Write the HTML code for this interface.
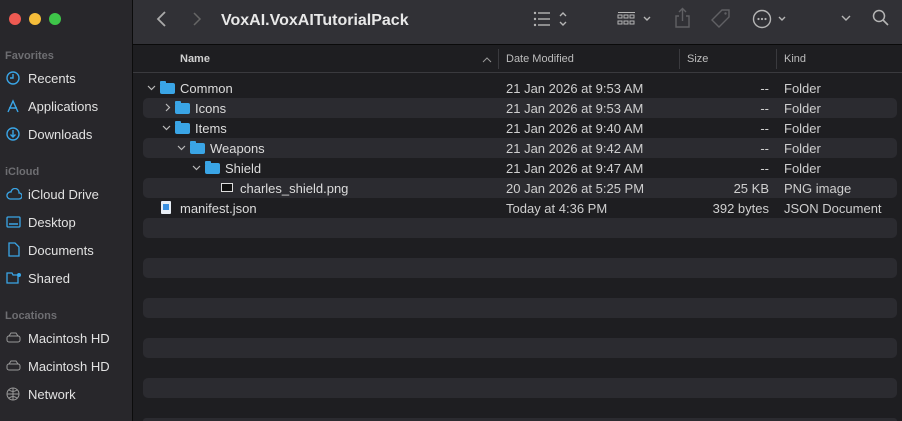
<!DOCTYPE html>
<html style="width:902px;height:421px;overflow:hidden"><head><meta charset="utf-8"><style>
*{margin:0;padding:0;box-sizing:border-box}
body{width:902px;height:421px;overflow:hidden;background:#1e1e21;font-family:"Liberation Sans",sans-serif;color:#dcdcdc;position:relative}
.sb{position:absolute;left:0;top:0;width:133px;height:421px;background:#28272b;border-right:1px solid #0c0c0c}
.dot{position:absolute;top:13px;width:12px;height:12px;border-radius:50%}
.sec{position:absolute;left:5px;font-size:11px;color:#6e6e72;font-weight:bold}
.it{position:absolute;left:28px;top:0;font-size:13px;color:#e2e2e2}
.ic{position:absolute;left:6px}
.tb{position:absolute;left:133px;top:0;right:0;height:45px;background:#313136;border-bottom:1px solid #0a0a0a}
.title{position:absolute;left:221px;top:12px;font-size:16px;font-weight:bold;color:#e8e8e8}
.hd{position:absolute;left:133px;top:45px;right:0;height:28px;border-bottom:1px solid #3a3a3e;font-size:11px;color:#bdbdbd}
.hd span{position:absolute;top:8px}
.hd i{position:absolute;top:4px;width:1px;height:20px;background:#3a3a3e}
.row{position:absolute;left:143px;width:754px;height:20px;border-radius:5px;font-size:13px;overflow:hidden}
.st{background:#2b2b30}
.row span{position:absolute;top:3px;white-space:nowrap}
.d{left:363px;color:#cfcfcf}.s{right:128px;color:#cfcfcf}.k{left:641px;color:#cfcfcf}
.f{position:absolute;top:5px;width:15px;height:11px;background:#3aa5e6;border-radius:2px}
.f:before{content:"";position:absolute;left:0;top:-2px;width:6px;height:3px;background:#3aa5e6;border-radius:1px 1px 0 0}
.ch{position:absolute;top:7px}
</style></head><body>
<div class="sb">
<div class="dot" style="left:9px;background:#ee5a52"></div>
<div class="dot" style="left:29px;background:#f5bd3a"></div>
<div class="dot" style="left:49px;background:#3ec549"></div>
<div class="sec" style="top:50px">Favorites</div>
<svg class="ic" style="top:71px" width="14" height="14"><circle cx="7" cy="7" r="6" fill="none" stroke="#3aa5e6" stroke-width="1.4"/><path d="M7 3v4H4" stroke="#3aa5e6" fill="none" stroke-width="1.4"/></svg>
<div class="it" style="top:71px">Recents</div>
<svg class="ic" style="top:99px" width="14" height="14"><path d="M2 13L7 2l5 11M3 9h8" stroke="#3aa5e6" fill="none" stroke-width="1.4"/></svg>
<div class="it" style="top:99px">Applications</div>
<svg class="ic" style="top:127px" width="14" height="14"><circle cx="7" cy="7" r="6" fill="none" stroke="#3aa5e6" stroke-width="1.4"/><path d="M7 3v7M4.5 7.5L7 10l2.5-2.5" stroke="#3aa5e6" fill="none" stroke-width="1.4"/></svg>
<div class="it" style="top:127px">Downloads</div>
<div class="sec" style="top:166px">iCloud</div>
<svg class="ic" style="top:188px" width="16" height="12"><path d="M4 11h9a3 3 0 000-6 4 4 0 00-8-1A3.5 3.5 0 004 11z" stroke="#3aa5e6" fill="none" stroke-width="1.3"/></svg>
<div class="it" style="top:187px">iCloud Drive</div>
<svg class="ic" style="top:216px" width="15" height="12"><rect x="1" y="1" width="13" height="10" rx="1" stroke="#3aa5e6" fill="none" stroke-width="1.3"/><path d="M3 8h9" stroke="#3aa5e6" stroke-width="1.5"/></svg>
<div class="it" style="top:215px">Desktop</div>
<svg class="ic" style="top:242px;left:8px" width="12" height="15"><path d="M1 1h6l4 4v9H1z" stroke="#3aa5e6" fill="none" stroke-width="1.3"/></svg>
<div class="it" style="top:243px">Documents</div>
<svg class="ic" style="top:271px" width="16" height="13"><path d="M1 2h5l1 2h5v8H1z" stroke="#3aa5e6" fill="none" stroke-width="1.3"/><circle cx="13" cy="4" r="2" fill="#3aa5e6"/></svg>
<div class="it" style="top:271px">Shared</div>
<div class="sec" style="top:310px">Locations</div>
<svg class="ic" style="top:332px" width="15" height="11"><rect x="1" y="4" width="13" height="6" rx="2" stroke="#999" fill="none"/><path d="M3 4l2-3h5l2 3" stroke="#999" fill="none"/></svg>
<div class="it" style="top:331px">Macintosh HD</div>
<svg class="ic" style="top:360px" width="15" height="11"><rect x="1" y="4" width="13" height="6" rx="2" stroke="#999" fill="none"/><path d="M3 4l2-3h5l2 3" stroke="#999" fill="none"/></svg>
<div class="it" style="top:359px">Macintosh HD</div>
<svg class="ic" style="top:387px" width="14" height="14"><circle cx="7" cy="7" r="6" stroke="#999" fill="none"/><path d="M1 7h12M7 1v12M3 3c3 2 5 2 8 0M3 11c3-2 5-2 8 0" stroke="#999" fill="none"/></svg>
<div class="it" style="top:387px">Network</div>
</div>
<div class="tb">
<svg style="position:absolute;left:22px;top:10px" width="12" height="18"><path d="M10 2L3 9l7 7" stroke="#aaa" fill="none" stroke-width="1.8"/></svg>
<svg style="position:absolute;left:59px;top:11px" width="10" height="16"><path d="M2 2l6 6-6 6" stroke="#666" fill="none" stroke-width="1.5"/></svg>
</div>
<div class="title">VoxAI.VoxAITutorialPack</div>
<svg style="position:absolute;left:533px;top:10px" width="40" height="18"><g fill="#b5b5b5"><circle cx="2" cy="3" r="1.2"/><circle cx="2" cy="9" r="1.2"/><circle cx="2" cy="15" r="1.2"/><rect x="5" y="2.3" width="12" height="1.4"/><rect x="5" y="8.3" width="12" height="1.4"/><rect x="5" y="14.3" width="12" height="1.4"/></g><path d="M27 6l3-3 3 3M27 12l3 3 3-3" stroke="#b5b5b5" fill="none" stroke-width="1.4"/></svg>
<svg style="position:absolute;left:617px;top:10px" width="40" height="18"><g fill="none" stroke="#b5b5b5"><rect x="1" y="5" width="4" height="3"/><rect x="7" y="5" width="4" height="3"/><rect x="13" y="5" width="4" height="3"/><rect x="1" y="11" width="4" height="3"/><rect x="7" y="11" width="4" height="3"/><rect x="13" y="11" width="4" height="3"/></g><path d="M1 2.5h17" stroke="#b5b5b5"/><path d="M27 7l3 3 3-3" stroke="#b5b5b5" fill="none" stroke-width="1.4"/></svg>
<svg style="position:absolute;left:674px;top:7px" width="18" height="22"><path d="M5 9H2v11h13V9h-3M8.5 14V2M5 5l3.5-3.5L12 5" stroke="#606064" fill="none" stroke-width="1.4"/></svg>
<svg style="position:absolute;left:710px;top:8px" width="22" height="22"><path d="M12 2h7v7L9 19 2 12z" stroke="#606064" fill="none" stroke-width="1.4"/><circle cx="15.5" cy="5.5" r="1.2" fill="#606064"/></svg>
<svg style="position:absolute;left:752px;top:9px" width="40" height="20"><circle cx="10" cy="10" r="8.5" stroke="#b5b5b5" fill="none" stroke-width="1.4"/><g fill="#b5b5b5"><circle cx="6.5" cy="10" r="1.1"/><circle cx="10" cy="10" r="1.1"/><circle cx="13.5" cy="10" r="1.1"/></g><path d="M27 8l3 3 3-3" stroke="#b5b5b5" fill="none" stroke-width="1.4"/></svg>
<svg style="position:absolute;left:840px;top:13px" width="12" height="10"><path d="M2 3l4 4 4-4" stroke="#b5b5b5" fill="none" stroke-width="1.4"/></svg>
<svg style="position:absolute;left:872px;top:9px" width="18" height="18"><circle cx="7" cy="7" r="5.5" stroke="#b5b5b5" fill="none" stroke-width="1.5"/><path d="M11 11l5 5" stroke="#b5b5b5" stroke-width="1.6"/></svg>
<div class="hd">
<span style="left:47px;font-weight:bold;color:#d0d0d0">Name</span>
<svg style="position:absolute;left:349px;top:11px" width="10" height="7"><path d="M1 6l4-4 4 4" stroke="#999" fill="none"/></svg>
<i style="left:365px"></i><span style="left:373px">Date Modified</span>
<i style="left:546px"></i><span style="left:554px">Size</span>
<i style="left:643px"></i><span style="left:651px">Kind</span>
</div>
<div class="row" style="top:78px"><svg class="ch" style="left:4px" width="9" height="6"><path d="M1 1l3.5 3.5L8 1" stroke="#bbb" fill="none" stroke-width="1.2"/></svg><div class="f" style="left:17px"></div><span style="left:37px">Common</span><span class="d">21 Jan 2026 at 9:53 AM</span><span class="s">--</span><span class="k">Folder</span></div>
<div class="row st" style="top:98px"><svg class="ch" style="left:22px;top:5px" width="6" height="9"><path d="M1 1l3.5 3.5L1 8" stroke="#bbb" fill="none" stroke-width="1.2"/></svg><div class="f" style="left:32px"></div><span style="left:52px">Icons</span><span class="d">21 Jan 2026 at 9:53 AM</span><span class="s">--</span><span class="k">Folder</span></div>
<div class="row" style="top:118px"><svg class="ch" style="left:19px" width="9" height="6"><path d="M1 1l3.5 3.5L8 1" stroke="#bbb" fill="none" stroke-width="1.2"/></svg><div class="f" style="left:32px"></div><span style="left:52px">Items</span><span class="d">21 Jan 2026 at 9:40 AM</span><span class="s">--</span><span class="k">Folder</span></div>
<div class="row st" style="top:138px"><svg class="ch" style="left:34px" width="9" height="6"><path d="M1 1l3.5 3.5L8 1" stroke="#bbb" fill="none" stroke-width="1.2"/></svg><div class="f" style="left:47px"></div><span style="left:67px">Weapons</span><span class="d">21 Jan 2026 at 9:42 AM</span><span class="s">--</span><span class="k">Folder</span></div>
<div class="row" style="top:158px"><svg class="ch" style="left:49px" width="9" height="6"><path d="M1 1l3.5 3.5L8 1" stroke="#bbb" fill="none" stroke-width="1.2"/></svg><div class="f" style="left:62px"></div><span style="left:82px">Shield</span><span class="d">21 Jan 2026 at 9:47 AM</span><span class="s">--</span><span class="k">Folder</span></div>
<div class="row st" style="top:178px"><div style="position:absolute;left:78px;top:5px;width:12px;height:9px;background:#111;border:1px solid #ddd"></div><span style="left:97px">charles_shield.png</span><span class="d">20 Jan 2026 at 5:25 PM</span><span class="s">25 KB</span><span class="k">PNG image</span></div>
<div class="row" style="top:198px"><div style="position:absolute;left:18px;top:3px;width:10px;height:13px;background:#e8eef5;border-radius:1px"><div style="margin:3px 2px;width:6px;height:6px;background:#3a8fe0"></div></div><span style="left:37px">manifest.json</span><span class="d">Today at 4:36 PM</span><span class="s">392 bytes</span><span class="k">JSON Document</span></div>
<div class="row st" style="top:218px"></div>
<div class="row st" style="top:258px"></div>
<div class="row st" style="top:298px"></div>
<div class="row st" style="top:338px"></div>
<div class="row st" style="top:378px"></div>
<div class="row st" style="top:418px;height:3px;border-radius:5px 5px 0 0"></div>
</body></html>
